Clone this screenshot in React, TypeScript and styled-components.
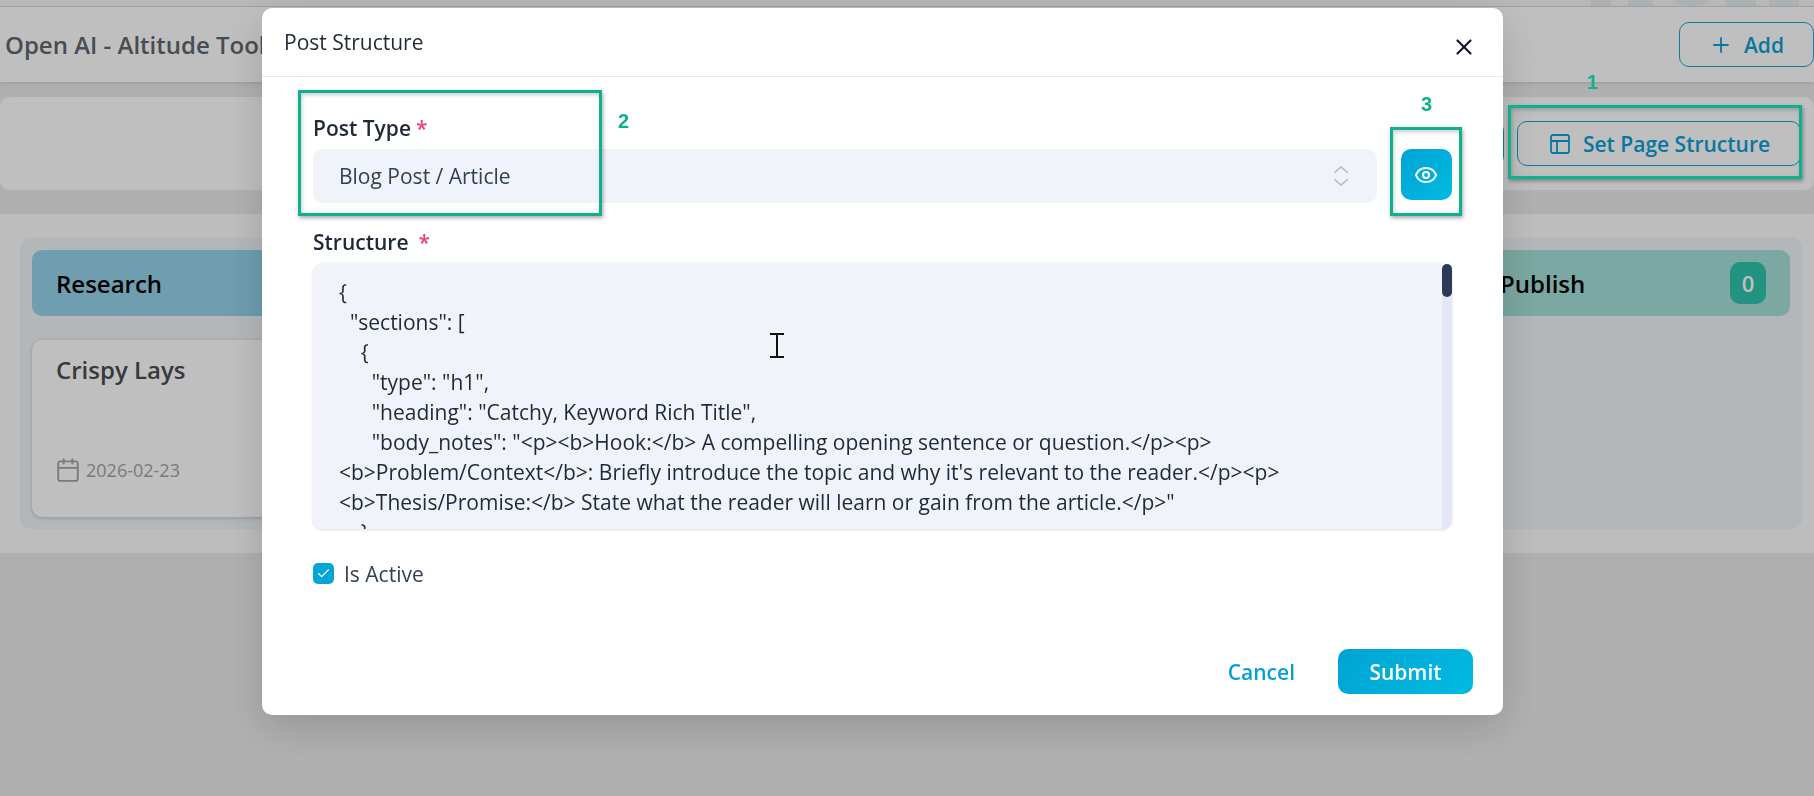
import React from "react";
import styled, { createGlobalStyle } from "styled-components";
import { Calendar, Check, Eye, PanelsTopLeft, Plus, User, X } from "lucide-react";

const Global = createGlobalStyle`
  html, body { margin: 0; padding: 0; height: 100%; overflow: hidden; background: #ebebeb; }
  * { box-sizing: border-box; }
  body { font-family: "Open Sans", "Noto Sans", sans-serif; }
`;

const Page = styled.div`
  width: 1814px;
  height: 796px;
  overflow: hidden;
  display: flex;
  flex-direction: column;
`;

const TopStrip = styled.div`
  height: 7px;
  background: #f6f6f6;
  border-bottom: 1px solid #dcdfe8;
  display: flex;
  justify-content: flex-end;
  overflow: hidden;
`;

const Watermark = styled.svg`
  width: 219px;
  height: 6px;
  margin-right: 10px;
`;

const Header = styled.header`
  height: 75px;
  flex: none;
  background: #fff;
  box-shadow: 0 1px 4px rgba(0, 0, 0, 0.14);
  display: flex;
  align-items: center;
  justify-content: space-between;
  padding-left: 5px;
`;

const PageTitle = styled.h1`
  margin: 0;
  font-size: 24px;
  font-weight: 600;
  color: #5f6770;
  white-space: nowrap;
`;

const OutlineButton = styled.button<{ $w: number }>`
  width: ${(p) => p.$w}px;
  height: 45px;
  flex: none;
  display: inline-flex;
  align-items: center;
  justify-content: center;
  gap: 11px;
  background: #fff;
  border: 1px solid #14a5d8;
  border-radius: 10px;
  color: #0a9fd4;
  font: 600 21px "Open Sans", sans-serif;
`;

const Toolbar = styled.section`
  margin-top: 15px;
  height: 93px;
  flex: none;
  background: #fff;
  border-radius: 10px;
  padding: 24px 13px 24px 0;
  display: flex;
  justify-content: flex-end;
  gap: 13px;
`;

const Board = styled.section`
  margin-top: 24px;
  height: 339px;
  flex: none;
  background: #fcfcfc;
  padding: 24px 12px 24px 20px;
`;

const Lane = styled.div`
  height: 291px;
  background: #eff5f9;
  border-radius: 10px;
  padding: 12px;
  display: flex;
  justify-content: space-between;
`;

const Column = styled.div`
  width: 314px;
  display: flex;
  flex-direction: column;
  gap: 24px;
`;

const ColumnHead = styled.div<{ $bg: string }>`
  height: 66px;
  flex: none;
  background: ${(p) => p.$bg};
  border-radius: 10px;
  padding: 0 24px;
  display: flex;
  align-items: center;
  justify-content: space-between;
  font-size: 24px;
  font-weight: 600;
  color: #000;
`;

const Badge = styled.span`
  width: 36px;
  height: 42px;
  border-radius: 10px;
  background: #2dc5ab;
  color: #fff;
  font-size: 22px;
  font-weight: 600;
  display: flex;
  align-items: center;
  justify-content: center;
`;

const Card = styled.article`
  height: 177px;
  background: #fff;
  border-radius: 10px;
  box-shadow: 0 1px 4px rgba(0, 0, 0, 0.2);
  padding: 13px 24px 0;
  display: flex;
  flex-direction: column;
  justify-content: flex-start;
`;

const CardTitle = styled.div`
  font-size: 24px;
  font-weight: 600;
  line-height: 34px;
  color: #4a4d52;
`;

const CardFoot = styled.div`
  margin-top: 61px;
  display: flex;
  align-items: center;
  justify-content: space-between;
  color: #a3a3a3;
  font-size: 18px;
`;

const DateBox = styled.span`
  display: flex;
  align-items: center;
  gap: 5px;
  margin-left: -1px;
`;

const Avatar = styled.span`
  width: 44px;
  height: 44px;
  border-radius: 50%;
  background: #a3aeb4;
  color: #fff;
  display: flex;
  align-items: center;
  justify-content: center;
  margin-right: 10px;
`;

const Backdrop = styled.div`
  position: fixed;
  inset: 0;
  background: rgba(0, 0, 0, 0.25);
`;

const Modal = styled.div`
  position: fixed;
  left: 262px;
  top: 8px;
  width: 1241px;
  height: 707px;
  background: #fff;
  border-radius: 10px;
  box-shadow: 0 12px 40px rgba(0, 0, 0, 0.16);
  display: flex;
  flex-direction: column;
`;

const ModalHead = styled.div`
  height: 69px;
  flex: none;
  border-bottom: 1px solid #e5e7eb;
  padding: 0 22px 0 22px;
  display: flex;
  align-items: flex-start;
  justify-content: space-between;
`;

const ModalTitle = styled.h2`
  margin: 20px 0 0;
  font-size: 21px;
  line-height: 28px;
  font-weight: 400;
  color: #1f2937;
`;

const CloseButton = styled.button`
  margin-top: 22px;
  padding: 0;
  width: 34px;
  height: 34px;
  border: 0;
  background: transparent;
  color: #111827;
  display: flex;
  align-items: center;
  justify-content: center;
`;

const ModalBody = styled.div`
  padding: 38px 51px 0;
  flex: none;
`;

const TypeRow = styled.div`
  display: flex;
  align-items: flex-end;
  gap: 24px;
`;

const Grow = styled.div`
  flex: 1;
`;

const FieldLabel = styled.label`
  display: block;
  height: 26px;
  line-height: 26px;
  margin-bottom: 8px;
  font-size: 21px;
  font-weight: 600;
  color: #1f2937;
`;

const Star = styled.span<{ $gap: number }>`
  color: #e8467c;
  margin-left: ${(p) => p.$gap}px;
`;

const SelectBox = styled.div`
  height: 54px;
  background: #f0f3f9;
  border-radius: 10px;
  padding: 0 28px 0 26px;
  display: flex;
  align-items: center;
  justify-content: space-between;
  font-size: 21px;
  color: #334155;
`;

const EyeButton = styled.button`
  width: 51px;
  height: 51px;
  flex: none;
  margin-bottom: 3px;
  border: 0;
  padding: 0 2px 0 0;
  border-radius: 10px;
  background: linear-gradient(135deg, #00a3d3, #00bbe2);
  color: #fff;
  display: flex;
  align-items: center;
  justify-content: center;
`;

const StructureField = styled.div`
  margin-top: 26px;
`;

const StructureFrame = styled.div`
  position: relative;
  height: 266px;
`;

const StructureInput = styled.textarea`
  display: block;
  width: 100%;
  height: 100%;
  border: 0;
  outline: 0;
  resize: none;
  padding: 14px 0 0 26px;
  background: #f0f3f9;
  border-radius: 10px;
  box-shadow: 0 1px 3px rgba(0, 0, 0, 0.14);
  font: 400 21px/30px "Open Sans", sans-serif;
  color: #1f2937;
  white-space: pre;
  overflow: hidden;
`;

const ScrollTrack = styled.div`
  position: absolute;
  top: 1px;
  right: 0;
  bottom: 0;
  width: 10px;
  background: #e2e8f5;
  border-radius: 5px 5px 10px 0;
`;

const ScrollThumb = styled.div`
  height: 33px;
  background: #2b3a55;
  border-radius: 5px;
`;

const CheckRow = styled.label`
  margin-top: 34px;
  display: flex;
  align-items: center;
  gap: 10px;
  height: 21px;
  font-size: 21px;
  color: #334155;
`;

const CheckBox = styled.span`
  width: 21px;
  height: 21px;
  border-radius: 5px;
  background: #03a5d8;
  color: #fff;
  display: flex;
  align-items: center;
  justify-content: center;
`;

const ModalFoot = styled.div`
  margin-top: auto;
  padding: 0 30px 21px;
  display: flex;
  justify-content: flex-end;
  align-items: center;
  gap: 43px;
`;

const CancelLink = styled.button`
  border: 0;
  background: none;
  padding: 0;
  color: #0a9fd4;
  font: 600 21px "Open Sans", sans-serif;
`;

const SubmitButton = styled.button`
  width: 135px;
  height: 45px;
  border: 0;
  border-radius: 10px;
  background: linear-gradient(135deg, #00a3d3, #00bbe2);
  color: #fff;
  font: 600 21px "Open Sans", sans-serif;
`;

const Marker = styled.div<{ $x: number; $y: number; $w: number; $h: number }>`
  position: fixed;
  left: ${(p) => p.$x}px;
  top: ${(p) => p.$y}px;
  width: ${(p) => p.$w}px;
  height: ${(p) => p.$h}px;
  border: 3px solid #0db08f;
  box-shadow: 1px 2px 4px rgba(0, 0, 0, 0.35), inset 1px 2px 4px rgba(0, 0, 0, 0.2);
  pointer-events: none;
`;

const MarkerNumber = styled.span<{ $x: number; $y: number }>`
  position: fixed;
  left: ${(p) => p.$x}px;
  top: ${(p) => p.$y}px;
  font: 700 20px/20px "Liberation Sans", sans-serif;
  color: #0db08f;
`;

const TextCursor = styled.svg`
  position: fixed;
  left: 760px;
  top: 330px;
  width: 48px;
  height: 47px;
  background: rgba(255, 255, 255, 0.08);
`;

const structure = `{
  "sections": [
    {
      "type": "h1",
      "heading": "Catchy, Keyword Rich Title",
      "body_notes": "<p><b>Hook:</b> A compelling opening sentence or question.</p><p>
<b>Problem/Context</b>: Briefly introduce the topic and why it's relevant to the reader.</p><p>
<b>Thesis/Promise:</b> State what the reader will learn or gain from the article.</p>"
    },
    {
      "type": "h2",
      "heading": "Main Point"
    }
  ]
}`;

export default function App() {
  return (
    <>
      <Global />
      <Page>
        <TopStrip>
          <Watermark viewBox="0 0 219 6">
            <g fill="#e6edf0">
              <rect x="6" width="20" height="6" />
              <rect x="43" width="25" height="6" />
              <path d="M88 0h36a18 6 0 0 1-36 0z" />
              <rect x="141" width="30" height="6" />
              <rect x="184" width="30" height="6" />
            </g>
          </Watermark>
        </TopStrip>
        <Header>
          <PageTitle>Open AI - Altitude Tool</PageTitle>
          <OutlineButton $w={135}>
            <Plus size={24} strokeWidth={1.8} />
            Add
          </OutlineButton>
        </Header>
        <Toolbar>
          <OutlineButton $w={200} />
          <OutlineButton $w={284}>
            <PanelsTopLeft size={24} strokeWidth={1.8} />
            Set Page Structure
          </OutlineButton>
        </Toolbar>
        <Board>
          <Lane>
            <Column>
              <ColumnHead $bg="#93d3eb">Research</ColumnHead>
              <Card>
                <CardTitle>Crispy Lays</CardTitle>
                <CardFoot>
                  <DateBox>
                    <Calendar size={26} strokeWidth={1.7} />
                    2026-02-23
                  </DateBox>
                  <Avatar>
                    <User size={26} strokeWidth={2} />
                  </Avatar>
                </CardFoot>
              </Card>
            </Column>
            <Column>
              <ColumnHead $bg="#a5e0d8">
                Publish
                <Badge>0</Badge>
              </ColumnHead>
            </Column>
          </Lane>
        </Board>
      </Page>
      <Backdrop />
      <Modal>
        <ModalHead>
          <ModalTitle>Post Structure</ModalTitle>
          <CloseButton aria-label="Close">
            <X size={26} strokeWidth={2} />
          </CloseButton>
        </ModalHead>
        <ModalBody>
          <TypeRow>
            <Grow>
              <FieldLabel>
                Post Type<Star $gap={5}>*</Star>
              </FieldLabel>
              <SelectBox>
                Blog Post / Article
                <svg width="16" height="24" viewBox="0 0 16 24" fill="none" stroke="#b2bccf" strokeWidth="1.6">
                  <path d="M1 9l7-6 7 6M1 15l7 6 7-6" />
                </svg>
              </SelectBox>
            </Grow>
            <EyeButton aria-label="Preview">
              <Eye size={24} strokeWidth={2} />
            </EyeButton>
          </TypeRow>
          <StructureField>
            <FieldLabel>
              Structure<Star $gap={10}>*</Star>
            </FieldLabel>
            <StructureFrame>
              <StructureInput readOnly value={structure} />
              <ScrollTrack>
                <ScrollThumb />
              </ScrollTrack>
            </StructureFrame>
          </StructureField>
          <CheckRow>
            <CheckBox>
              <Check size={15} strokeWidth={1.8} />
            </CheckBox>
            Is Active
          </CheckRow>
        </ModalBody>
        <ModalFoot>
          <CancelLink>Cancel</CancelLink>
          <SubmitButton>Submit</SubmitButton>
        </ModalFoot>
      </Modal>
      <Marker $x={1508} $y={105} $w={294} $h={74} />
      <Marker $x={298} $y={90} $w={304} $h={126} />
      <Marker $x={1390} $y={127} $w={72} $h={89} />
      <MarkerNumber $x={1587} $y={72}>1</MarkerNumber>
      <MarkerNumber $x={618} $y={111}>2</MarkerNumber>
      <MarkerNumber $x={1421} $y={94}>3</MarkerNumber>
      <TextCursor viewBox="0 0 48 47">
        <path d="M10 4h14M10 27h14M17 4v23" stroke="#111" strokeWidth="2" fill="none" />
      </TextCursor>
    </>
  );
}
